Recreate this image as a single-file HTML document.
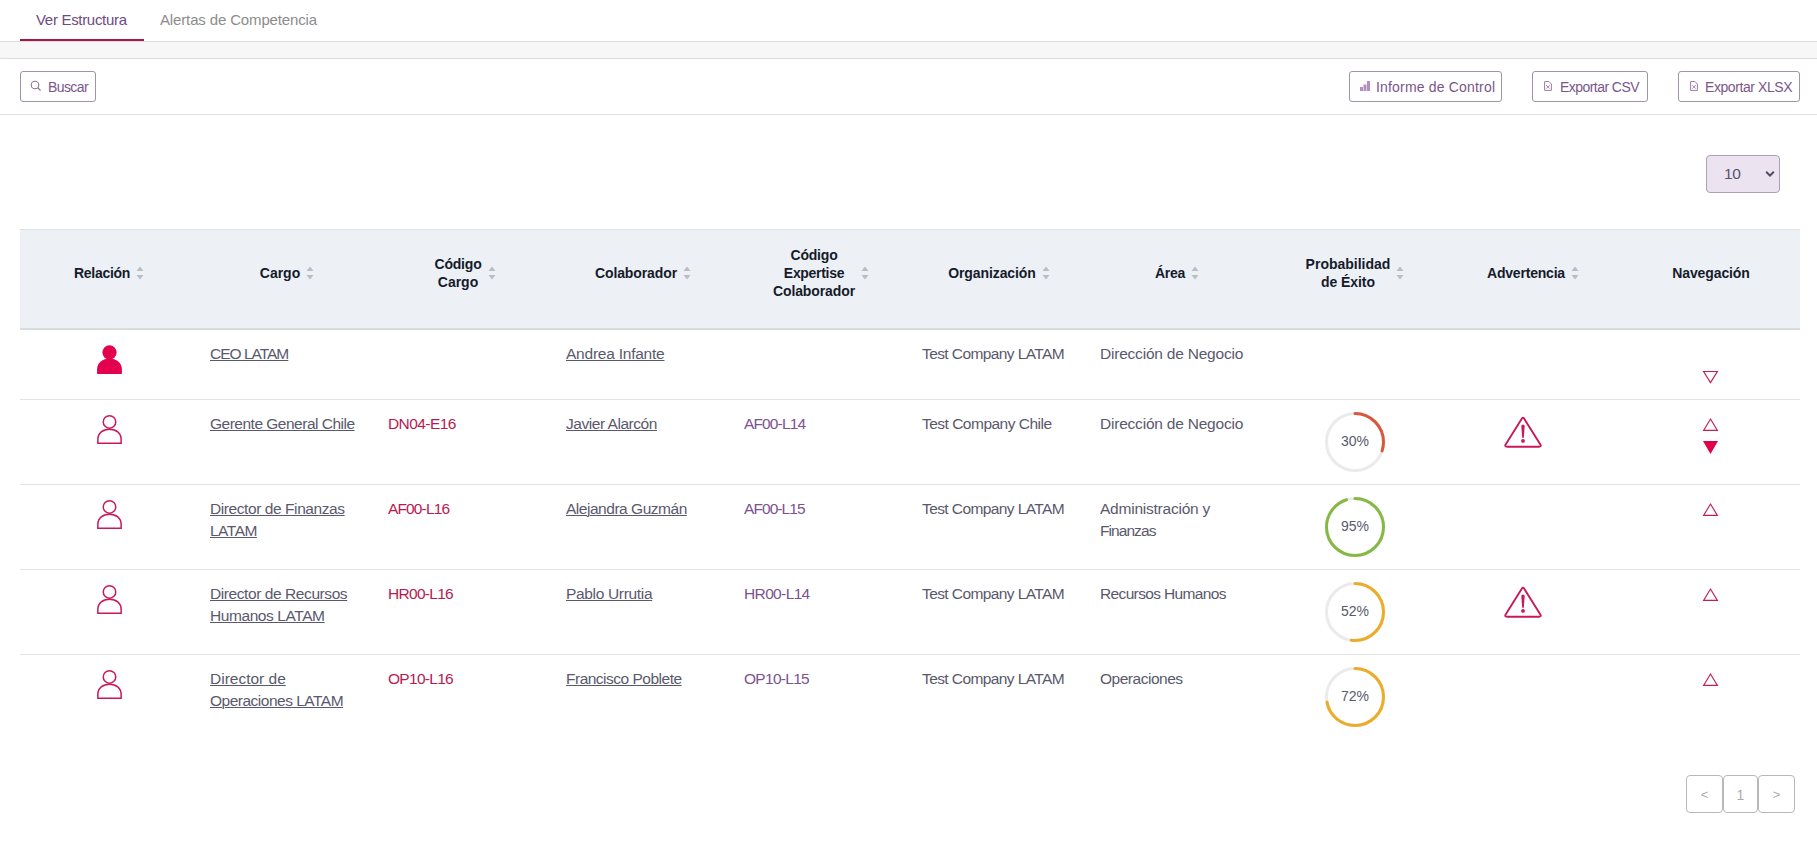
<!DOCTYPE html><html><head><meta charset="utf-8"><style>
*{box-sizing:border-box;margin:0;padding:0}
html,body{width:1817px;height:841px;overflow:hidden;background:#fff;font-family:"Liberation Sans",sans-serif}
body{position:relative}
.a{position:absolute;white-space:nowrap}
.tab{font-size:15px;top:10.5px;line-height:18px}
.band{left:-3px;top:41px;width:1830px;height:18px;background:#f7f7f7;border:1px solid #dedede;border-radius:4px}
.hr{left:0;width:1817px;height:1px;background:#e2e2e2}
.btn{border:1px solid #a393a8;border-radius:3px;background:#fff;height:31px;top:71px}
.bt{font-size:14px;color:#7b568a;line-height:16px;top:79px}
.thead{left:20px;top:229px;width:1780px;height:101px;background:#edf0f5;border-top:1px solid #dfe1e6;border-bottom:2px solid #d8dbe0}
.th{font-weight:bold;font-size:14px;color:#151b2b;text-align:center;line-height:18px;width:178px;display:flex;align-items:center;justify-content:center}
.th span{display:inline-block}
.sort{display:inline-block;width:8px;height:14px;margin-left:6px;position:relative;top:0}
.rl{left:20px;width:1780px;height:1px;background:#e3e3e3}
.td{font-size:15.5px;color:#5a596c;line-height:22px}
.lk{text-decoration:underline;text-decoration-thickness:1px;text-underline-offset:1px}
.cc{color:#b81a50}
.ce{color:#7c5291}
.pct{font-size:14px;color:#575a6c;width:60px;text-align:center;line-height:16px}
.pg{border:1px solid #b8b8b8;border-radius:4px;height:38px;top:775px;color:#ababab;font-size:14px;text-align:center;line-height:35px}
</style></head><body>
<div class="a tab" style="left:36px;color:#6f4b80;letter-spacing:-0.31px">Ver Estructura</div>
<div class="a tab" style="left:160px;color:#8c8c8c;letter-spacing:-0.14px">Alertas de Competencia</div>
<div class="a" style="left:20px;top:39px;width:124px;height:2px;background:#a3164b"></div>
<div class="a band"></div>
<div class="a btn" style="left:20px;width:76px"></div>
<svg class="a" style="left:30px;top:80px" width="12" height="12" viewBox="0 0 12 12"><circle cx="5" cy="5" r="3.8" fill="none" stroke="#8a7590" stroke-width="1.1"/><path d="M7.8 7.8L10.6 10.6" stroke="#8a7590" stroke-width="1.3"/></svg>
<div class="a bt" style="left:48px;letter-spacing:-0.6px">Buscar</div>
<div class="a btn" style="left:1349px;width:153px"></div>
<svg class="a" style="left:1360px;top:81px" width="10" height="10" viewBox="0 0 10 10"><rect x="0" y="6" width="3" height="4" fill="#b58ec0"/><rect x="3.5" y="3.5" width="3" height="6.5" fill="#b58ec0"/><rect x="7" y="0" width="3" height="10" fill="#b58ec0"/></svg>
<div class="a bt" style="left:1376px;letter-spacing:0.18px">Informe de Control</div>
<div class="a btn" style="left:1532px;width:116px"></div>
<svg class="a" style="left:1544px;top:81px" width="8" height="10" viewBox="0 0 8 10"><path d="M0.6 0.6H5L7.4 3V9.4H0.6Z" fill="none" stroke="#9c7ca6" stroke-width="1"/><path d="M2.3 4.2L5.7 7.6M5.7 4.2L2.3 7.6" stroke="#9c7ca6" stroke-width="0.9"/></svg>
<div class="a bt" style="left:1560px"><span style="letter-spacing:-0.55px">Exportar CSV</span></div>
<div class="a btn" style="left:1678px;width:122px"></div>
<svg class="a" style="left:1690px;top:81px" width="8" height="10" viewBox="0 0 8 10"><path d="M0.6 0.6H5L7.4 3V9.4H0.6Z" fill="none" stroke="#9c7ca6" stroke-width="1"/><path d="M2.3 4.2L5.7 7.6M5.7 4.2L2.3 7.6" stroke="#9c7ca6" stroke-width="0.9"/></svg>
<div class="a bt" style="left:1705px"><span style="letter-spacing:-0.42px">Exportar XLSX</span></div>
<div class="a hr" style="top:114px"></div>
<div class="a" style="left:1706px;top:155px;width:74px;height:38px;background:#ece3f1;border:1px solid #ad9fb5;border-radius:4px"></div>
<div class="a" style="left:1724px;top:165px;font-size:15.5px;color:#57546a;line-height:18px;letter-spacing:-0.3px">10</div>
<svg class="a" style="left:1765px;top:170px" width="10" height="8" viewBox="0 0 10 8"><path d="M1.2 1.8L5 5.6L8.8 1.8" fill="none" stroke="#4e4b60" stroke-width="2"/></svg>
<div class="a thead"></div>
<div class="a th" style="left:20px;top:223px;height:100px"><span><span style="letter-spacing:-0.29px">Relación</span></span><svg class="sort" viewBox="0 0 8 14" width="8" height="14"><path d="M4 0.5L7.5 5H0.5Z M4 13.5L7.5 9H0.5Z" fill="#b9bdc4"/></svg></div>
<div class="a th" style="left:198px;top:223px;height:100px"><span>Cargo</span><svg class="sort" viewBox="0 0 8 14" width="8" height="14"><path d="M4 0.5L7.5 5H0.5Z M4 13.5L7.5 9H0.5Z" fill="#b9bdc4"/></svg></div>
<div class="a th" style="left:376px;top:223px;height:100px"><span><span style="letter-spacing:-0.2px">Código</span><br>Cargo</span><svg class="sort" viewBox="0 0 8 14" width="8" height="14"><path d="M4 0.5L7.5 5H0.5Z M4 13.5L7.5 9H0.5Z" fill="#b9bdc4"/></svg></div>
<div class="a th" style="left:554px;top:223px;height:100px"><span><span style="letter-spacing:-0.1px">Colaborador</span></span><svg class="sort" viewBox="0 0 8 14" width="8" height="14"><path d="M4 0.5L7.5 5H0.5Z M4 13.5L7.5 9H0.5Z" fill="#b9bdc4"/></svg></div>
<div class="a th" style="left:732px;top:223px;height:100px"><span><span style="letter-spacing:-0.2px">Código</span><br><span style="letter-spacing:-0.31px">Expertise</span><br><span style="letter-spacing:-0.1px">Colaborador</span></span><svg class="sort" viewBox="0 0 8 14" width="8" height="14"><path d="M4 0.5L7.5 5H0.5Z M4 13.5L7.5 9H0.5Z" fill="#b9bdc4"/></svg></div>
<div class="a th" style="left:910px;top:223px;height:100px"><span><span style="letter-spacing:-0.09px">Organización</span></span><svg class="sort" viewBox="0 0 8 14" width="8" height="14"><path d="M4 0.5L7.5 5H0.5Z M4 13.5L7.5 9H0.5Z" fill="#b9bdc4"/></svg></div>
<div class="a th" style="left:1088px;top:223px;height:100px"><span><span style="letter-spacing:-0.33px">Área</span></span><svg class="sort" viewBox="0 0 8 14" width="8" height="14"><path d="M4 0.5L7.5 5H0.5Z M4 13.5L7.5 9H0.5Z" fill="#b9bdc4"/></svg></div>
<div class="a th" style="left:1266px;top:223px;height:100px"><span>Probabilidad<br><span style="letter-spacing:-0.07px">de Éxito</span></span><svg class="sort" viewBox="0 0 8 14" width="8" height="14"><path d="M4 0.5L7.5 5H0.5Z M4 13.5L7.5 9H0.5Z" fill="#b9bdc4"/></svg></div>
<div class="a th" style="left:1444px;top:223px;height:100px"><span><span style="letter-spacing:-0.2px">Advertencia</span></span><svg class="sort" viewBox="0 0 8 14" width="8" height="14"><path d="M4 0.5L7.5 5H0.5Z M4 13.5L7.5 9H0.5Z" fill="#b9bdc4"/></svg></div>
<div class="a th" style="left:1622px;top:223px;height:100px"><span><span style="letter-spacing:-0.11px">Navegación</span></span></div>
<div class="a rl" style="top:399px"></div>
<div class="a rl" style="top:484px"></div>
<div class="a rl" style="top:569px"></div>
<div class="a rl" style="top:654px"></div>
<svg class="a" style="left:96px;top:344px" width="27" height="31" viewBox="0 0 27 31"><circle cx="13.5" cy="8.4" r="7.1" fill="#e2004f"/><path d="M1.1 29.9V25.3C1.1 18.8 6.8 14.5 13.5 14.5S25.9 18.8 25.9 25.3V29.9Z" fill="#e2004f"/></svg>
<div class="a td" style="left:210px;top:342.5px"><span class="lk"><span style="letter-spacing:-1.0px">CEO LATAM</span></span></div>
<div class="a td" style="left:566px;top:342.5px"><span class="lk"><span style="letter-spacing:-0.23px">Andrea Infante</span></span></div>
<div class="a td" style="left:922px;top:342.5px"><span style="letter-spacing:-0.59px">Test Company LATAM</span></div>
<div class="a td" style="left:1100px;top:342.5px"><span style="letter-spacing:-0.21px">Dirección de Negocio</span></div>
<svg class="a" style="left:1702px;top:370px" width="17" height="15" viewBox="0 0 17 15"><path d="M8.5 12.6L15.4 1.5H1.6Z" fill="none" stroke="#c21f58" stroke-width="1.15"/></svg>
<svg class="a" style="left:96px;top:414px" width="27" height="31" viewBox="0 0 27 31"><circle cx="13.5" cy="7.9" r="6.25" fill="none" stroke="#c9195a" stroke-width="1.5"/><path d="M1.85 29.15V25.5C1.85 19 7 15.25 13.5 15.25S25.15 19 25.15 25.5V29.15Z" fill="none" stroke="#c9195a" stroke-width="1.5"/></svg>
<div class="a td" style="left:210px;top:412.5px"><span class="lk"><span style="letter-spacing:-0.5px">Gerente General Chile</span></span></div>
<div class="a td cc" style="left:388px;top:412.5px"><span style="letter-spacing:-0.57px">DN04-E16</span></div>
<div class="a td" style="left:566px;top:412.5px"><span class="lk"><span style="letter-spacing:-0.46px">Javier Alarcón</span></span></div>
<div class="a td ce" style="left:744px;top:412.5px"><span style="letter-spacing:-0.86px">AF00-L14</span></div>
<div class="a td" style="left:922px;top:412.5px"><span style="letter-spacing:-0.51px">Test Company Chile</span></div>
<div class="a td" style="left:1100px;top:412.5px"><span style="letter-spacing:-0.21px">Dirección de Negocio</span></div>
<svg class="a" style="left:1324px;top:411px" width="62" height="62" viewBox="0 0 62 62"><circle cx="31" cy="31" r="28.5" fill="none" stroke="#ebebeb" stroke-width="3"/><circle cx="31" cy="31" r="28.5" fill="none" stroke="#d9573b" stroke-width="3" stroke-linecap="round" stroke-dasharray="53.72 179.07" transform="rotate(-90 31 31)"/></svg>
<div class="a pct" style="left:1325px;top:433px">30%</div>
<svg class="a" style="left:1502px;top:415px" width="42" height="35" viewBox="0 0 42 35"><path d="M19.3 4.6Q21 1.0 22.7 4.6L38.2 29.2Q39.8 31.8 36.8 31.8H5.2Q2.2 31.8 3.8 29.2Z" fill="none" stroke="#c9195a" stroke-width="1.9" stroke-linejoin="round"/><path d="M19.3 10.9Q19.3 9.4 21 9.4Q22.7 9.4 22.7 10.9L21.8 22.8H20.2Z" fill="#c9195a"/><circle cx="21" cy="25.9" r="1.9" fill="#c9195a"/></svg>
<svg class="a" style="left:1702px;top:417px" width="17" height="15" viewBox="0 0 17 15"><path d="M8.5 2.0L15.4 13.4H1.6Z" fill="none" stroke="#c21f58" stroke-width="1.15" stroke-linejoin="miter"/></svg>
<svg class="a" style="left:1702px;top:440px" width="17" height="15" viewBox="0 0 17 15"><path d="M8.5 14L16 1H1Z" fill="#e0004d"/></svg>
<svg class="a" style="left:96px;top:499px" width="27" height="31" viewBox="0 0 27 31"><circle cx="13.5" cy="7.9" r="6.25" fill="none" stroke="#c9195a" stroke-width="1.5"/><path d="M1.85 29.15V25.5C1.85 19 7 15.25 13.5 15.25S25.15 19 25.15 25.5V29.15Z" fill="none" stroke="#c9195a" stroke-width="1.5"/></svg>
<div class="a td" style="left:210px;top:497.5px"><span class="lk"><span style="letter-spacing:-0.42px">Director de Finanzas</span></span><br><span class="lk"><span style="letter-spacing:-0.5px">LATAM</span></span></div>
<div class="a td cc" style="left:388px;top:497.5px"><span style="letter-spacing:-0.86px">AF00-L16</span></div>
<div class="a td" style="left:566px;top:497.5px"><span class="lk"><span style="letter-spacing:-0.47px">Alejandra Guzmán</span></span></div>
<div class="a td ce" style="left:744px;top:497.5px"><span style="letter-spacing:-0.93px">AF00-L15</span></div>
<div class="a td" style="left:922px;top:497.5px"><span style="letter-spacing:-0.59px">Test Company LATAM</span></div>
<div class="a td" style="left:1100px;top:497.5px"><span style="letter-spacing:-0.23px">Administración y</span><br><span style="letter-spacing:-0.93px">Finanzas</span></div>
<svg class="a" style="left:1324px;top:496px" width="62" height="62" viewBox="0 0 62 62"><circle cx="31" cy="31" r="28.5" fill="none" stroke="#ebebeb" stroke-width="3"/><circle cx="31" cy="31" r="28.5" fill="none" stroke="#86b944" stroke-width="3" stroke-linecap="round" stroke-dasharray="170.12 179.07" transform="rotate(-90 31 31)"/></svg>
<div class="a pct" style="left:1325px;top:518px">95%</div>
<svg class="a" style="left:1702px;top:502px" width="17" height="15" viewBox="0 0 17 15"><path d="M8.5 2.0L15.4 13.4H1.6Z" fill="none" stroke="#c21f58" stroke-width="1.15" stroke-linejoin="miter"/></svg>
<svg class="a" style="left:96px;top:584px" width="27" height="31" viewBox="0 0 27 31"><circle cx="13.5" cy="7.9" r="6.25" fill="none" stroke="#c9195a" stroke-width="1.5"/><path d="M1.85 29.15V25.5C1.85 19 7 15.25 13.5 15.25S25.15 19 25.15 25.5V29.15Z" fill="none" stroke="#c9195a" stroke-width="1.5"/></svg>
<div class="a td" style="left:210px;top:582.5px"><span class="lk"><span style="letter-spacing:-0.42px">Director de Recursos</span></span><br><span class="lk"><span style="letter-spacing:-0.42px">Humanos LATAM</span></span></div>
<div class="a td cc" style="left:388px;top:582.5px"><span style="letter-spacing:-0.71px">HR00-L16</span></div>
<div class="a td" style="left:566px;top:582.5px"><span class="lk"><span style="letter-spacing:-0.33px">Pablo Urrutia</span></span></div>
<div class="a td ce" style="left:744px;top:582.5px"><span style="letter-spacing:-0.63px">HR00-L14</span></div>
<div class="a td" style="left:922px;top:582.5px"><span style="letter-spacing:-0.59px">Test Company LATAM</span></div>
<div class="a td" style="left:1100px;top:582.5px"><span style="letter-spacing:-0.64px">Recursos Humanos</span></div>
<svg class="a" style="left:1324px;top:581px" width="62" height="62" viewBox="0 0 62 62"><circle cx="31" cy="31" r="28.5" fill="none" stroke="#ebebeb" stroke-width="3"/><circle cx="31" cy="31" r="28.5" fill="none" stroke="#ebad27" stroke-width="3" stroke-linecap="round" stroke-dasharray="93.12 179.07" transform="rotate(-90 31 31)"/></svg>
<div class="a pct" style="left:1325px;top:603px">52%</div>
<svg class="a" style="left:1502px;top:585px" width="42" height="35" viewBox="0 0 42 35"><path d="M19.3 4.6Q21 1.0 22.7 4.6L38.2 29.2Q39.8 31.8 36.8 31.8H5.2Q2.2 31.8 3.8 29.2Z" fill="none" stroke="#c9195a" stroke-width="1.9" stroke-linejoin="round"/><path d="M19.3 10.9Q19.3 9.4 21 9.4Q22.7 9.4 22.7 10.9L21.8 22.8H20.2Z" fill="#c9195a"/><circle cx="21" cy="25.9" r="1.9" fill="#c9195a"/></svg>
<svg class="a" style="left:1702px;top:587px" width="17" height="15" viewBox="0 0 17 15"><path d="M8.5 2.0L15.4 13.4H1.6Z" fill="none" stroke="#c21f58" stroke-width="1.15" stroke-linejoin="miter"/></svg>
<svg class="a" style="left:96px;top:669px" width="27" height="31" viewBox="0 0 27 31"><circle cx="13.5" cy="7.9" r="6.25" fill="none" stroke="#c9195a" stroke-width="1.5"/><path d="M1.85 29.15V25.5C1.85 19 7 15.25 13.5 15.25S25.15 19 25.15 25.5V29.15Z" fill="none" stroke="#c9195a" stroke-width="1.5"/></svg>
<div class="a td" style="left:210px;top:667.5px"><span class="lk">Director de</span><br><span class="lk"><span style="letter-spacing:-0.5px">Operaciones LATAM</span></span></div>
<div class="a td cc" style="left:388px;top:667.5px"><span style="letter-spacing:-0.71px">OP10-L16</span></div>
<div class="a td" style="left:566px;top:667.5px"><span class="lk"><span style="letter-spacing:-0.5px">Francisco Poblete</span></span></div>
<div class="a td ce" style="left:744px;top:667.5px"><span style="letter-spacing:-0.71px">OP10-L15</span></div>
<div class="a td" style="left:922px;top:667.5px"><span style="letter-spacing:-0.59px">Test Company LATAM</span></div>
<div class="a td" style="left:1100px;top:667.5px"><span style="letter-spacing:-0.48px">Operaciones</span></div>
<svg class="a" style="left:1324px;top:666px" width="62" height="62" viewBox="0 0 62 62"><circle cx="31" cy="31" r="28.5" fill="none" stroke="#ebebeb" stroke-width="3"/><circle cx="31" cy="31" r="28.5" fill="none" stroke="#ebad27" stroke-width="3" stroke-linecap="round" stroke-dasharray="128.93 179.07" transform="rotate(-90 31 31)"/></svg>
<div class="a pct" style="left:1325px;top:688px">72%</div>
<svg class="a" style="left:1702px;top:672px" width="17" height="15" viewBox="0 0 17 15"><path d="M8.5 2.0L15.4 13.4H1.6Z" fill="none" stroke="#c21f58" stroke-width="1.15" stroke-linejoin="miter"/></svg>
<div class="a pg" style="left:1686px;width:37px;font-size:13px;line-height:37px">&lt;</div>
<div class="a pg" style="left:1723px;width:35px;line-height:38px">1</div>
<div class="a pg" style="left:1758px;width:37px;font-size:13px;line-height:37px">&gt;</div>
</body></html>
